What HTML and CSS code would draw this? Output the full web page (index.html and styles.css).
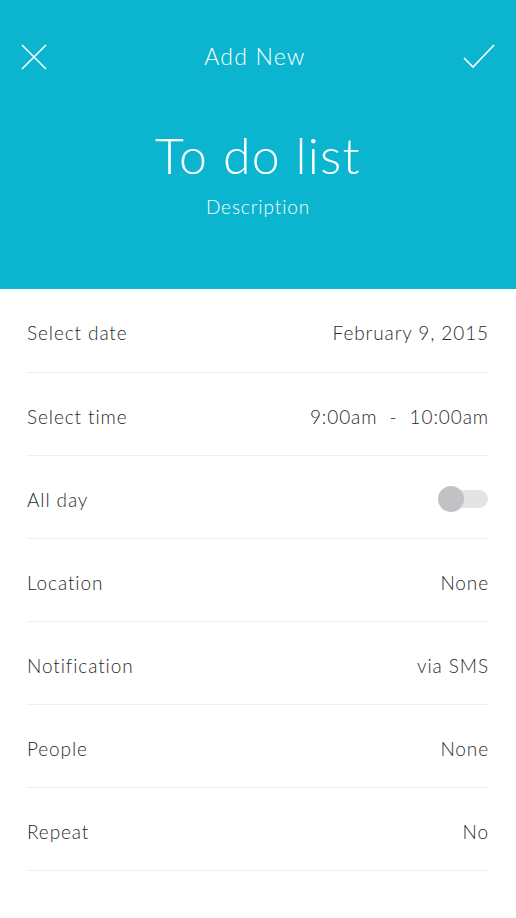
FILE: index.html
```html
<!DOCTYPE html>
<html>
<head>
<meta charset="utf-8">
<link rel="stylesheet" href="styles.css">
</head>
<body>
<div class="app">
  <header class="hero">
    <div class="topbar">
      <svg class="icon" width="28" height="28" viewBox="0 0 28 28"><path d="M2 2L26 26M26 2L2 26" stroke="#fff" stroke-width="1.6" fill="none"/></svg>
      <div class="topbar-title">Add New</div>
      <svg class="icon" width="34" height="28" viewBox="0 0 34 28"><path d="M2 15L11 24L32 2" stroke="#fff" stroke-width="1.6" fill="none"/></svg>
    </div>
    <h1 class="title">To do list</h1>
    <div class="desc">Description</div>
  </header>
  <ul class="list">
    <li class="row"><span class="label">Select date</span><span class="value">February 9, 2015</span></li>
    <li class="row"><span class="label">Select time</span><span class="value">9:00am&nbsp; - &nbsp;10:00am</span></li>
    <li class="row"><span class="label">All day</span><span class="toggle"><span class="knob"></span></span></li>
    <li class="row"><span class="label">Location</span><span class="value">None</span></li>
    <li class="row"><span class="label">Notification</span><span class="value">via SMS</span></li>
    <li class="row"><span class="label">People</span><span class="value">None</span></li>
    <li class="row"><span class="label">Repeat</span><span class="value">No</span></li>
  </ul>
</div>
</body>
</html>
```
FILE: styles.css
```css
html, body { margin: 0; padding: 0; background: #fff; }
body { font-family: Lato, "Open Sans", sans-serif; color: #333; }
.app { width: 516px; }
.hero {
  background: #0bb5d0;
  height: 289px;
  box-sizing: border-box;
  padding: 43px 20px 0 20px;
  display: flex;
  flex-direction: column;
  align-items: center;
  color: #fff;
}
.topbar {
  width: 100%;
  display: flex;
  justify-content: space-between;
  align-items: center;
  height: 28px;
}
.topbar .icon { display: block; }
.topbar-title { font-size: 23px; font-weight: 300; letter-spacing: 1.2px; margin-top: -2px; }
.title {
  margin: 54px 0 0 0;
  font-size: 50px;
  font-weight: 300;
  line-height: 60px;
  letter-spacing: 1.2px;
}
.desc { margin-top: 10px; font-size: 19px; font-weight: 300; line-height: 24px; letter-spacing: 0.9px; }
.list { list-style: none; margin: 0; padding: 0 27px; }
.row {
  height: 83px;
  box-sizing: border-box;
  border-bottom: 1px solid #efefef;
  display: flex;
  justify-content: space-between;
  align-items: center;
  padding-top: 4px;
  font-size: 19px;
  font-weight: 300;
  letter-spacing: 0.9px;
}
.row:first-child { height: 84px; }
.label, .value { color: #2a2a2a; }
.toggle {
  position: relative;
  width: 50px;
  height: 18px;
  background: #e4e4e6;
  border-radius: 9px;
  margin-right: 1px;
}
.knob {
  position: absolute;
  left: 0;
  top: -4px;
  width: 26px;
  height: 26px;
  border-radius: 50%;
  background: #c2c2c6;
}
```
